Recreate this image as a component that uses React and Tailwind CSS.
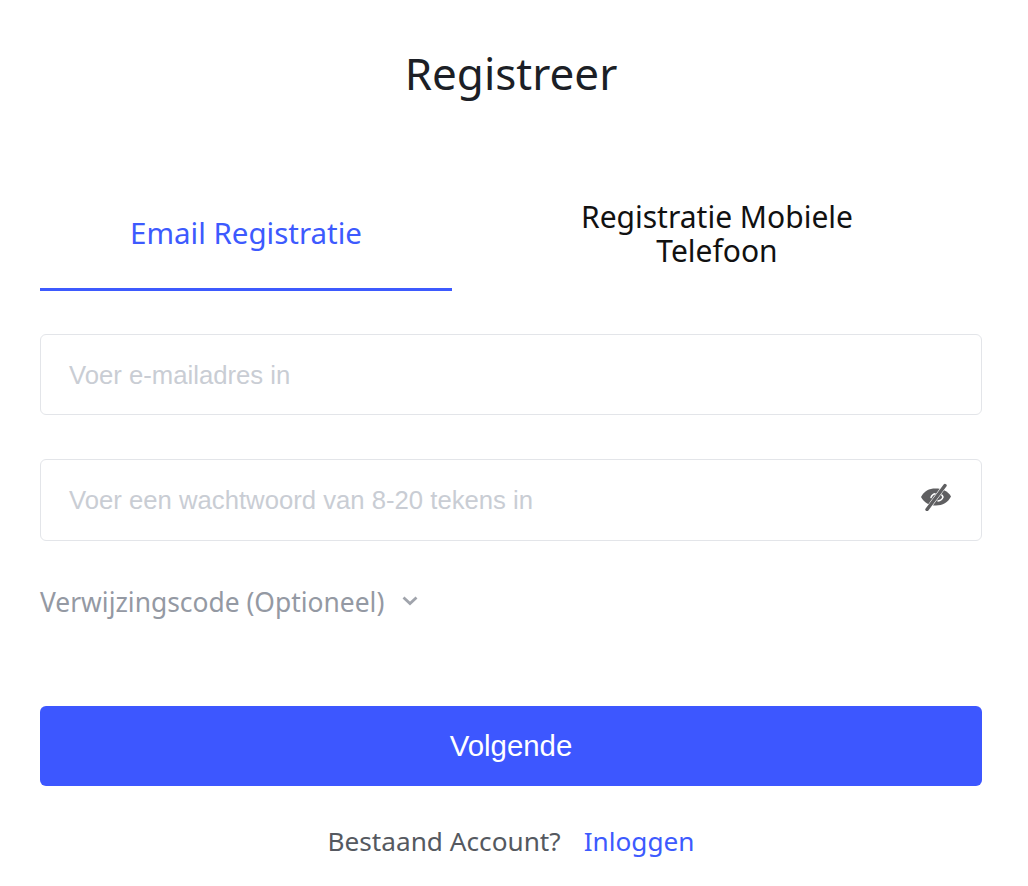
import React from 'react';

function EyeOff() {
  return (
    <svg width="32" height="28" viewBox="0 0 32 28" fill="none" className="mb-[7px]">
      <path d="M1 14C4 8 9 5.500 15.500 5.500 22 5.500 28 8 31 13.500 28 19.500 22.500 22.500 16 22.500 9.500 22.500 4 20 1 14z" fill="#5f5f61" />
      <path d="M11 14.500c.7-2 2-3.300 4-3.700" stroke="#fff" strokeWidth="1.500" strokeLinecap="round" />
      <path d="M18 18c2.500-.3 4.200-1.600 5-4-.3-.8-.7-1.400-1.200-2" stroke="#fff" strokeWidth="1.500" strokeLinecap="round" />
      <path d="M6 28 26 1" stroke="#fff" strokeWidth="4.500" />
      <path d="M7 26.500 25 2.500" stroke="#5f5f61" strokeWidth="3.400" strokeLinecap="round" />
    </svg>
  );
}

function App() {
  return (
    <div className="w-[1028px] h-[886px] bg-white pl-10 pr-[46px] font-['Noto_Sans',sans-serif] overflow-hidden">
      <h1 className="h-[146px] pt-[41px] text-center text-[44px] leading-[64px] text-[#1c1f26]">Registreer</h1>

      <div className="flex h-[144px] pt-[51px]">
        <div className="w-[412px] h-[94px] flex justify-center pt-[19px] border-b-[3px] border-[#3d5afe] text-[29.500px] leading-[34px] text-[#3d5afe]">
          Email Registratie
        </div>
        <div className="flex-1 h-[94px] pt-[3px] text-center px-[90px] text-[30px] leading-[34px] text-[#111]">
          Registratie Mobiele Telefoon
        </div>
      </div>

      <div className="mt-[44px] h-[81px] pt-[2px] flex items-center border border-[#e3e5e9] rounded-md px-7 font-['Liberation_Sans',sans-serif] text-[25.700px] text-[#c9cdd4]">
        Voer e-mailadres in
      </div>

      <div className="mt-[44px] h-[82px] flex items-center justify-between border border-[#e3e5e9] rounded-md pl-7 pr-[29px] font-['Liberation_Sans',sans-serif] text-[25.700px] text-[#c9cdd4]">
        <span>Voer een wachtwoord van 8-20 tekens in</span>
        <EyeOff />
      </div>

      <div className="mt-[39px] h-[44px] flex items-center gap-4 text-[26.400px] leading-[44px] text-[#9499a3]">
        <span>Verwijzingscode (Optioneel)</span>
        <svg width="20" height="20" viewBox="0 0 20 20" fill="none" className="mt-[-3px]">
          <path d="M3.500 6.500 10 12.500l6.500-6" stroke="#a0a4ac" strokeWidth="2.800" />
        </svg>
      </div>

      <button className="mt-[82px] w-full h-[80px] rounded-md bg-[#3d57ff] text-white font-['Liberation_Sans',sans-serif] text-[29.400px]">
        Volgende
      </button>

      <div className="mt-[37px] flex justify-center gap-[23px] text-[26.200px] leading-[36px]">
        <span className="text-[#555960]">Bestaand Account?</span>
        <span className="text-[#3d5afe]">Inloggen</span>
      </div>
    </div>
  );
}

export default App;
